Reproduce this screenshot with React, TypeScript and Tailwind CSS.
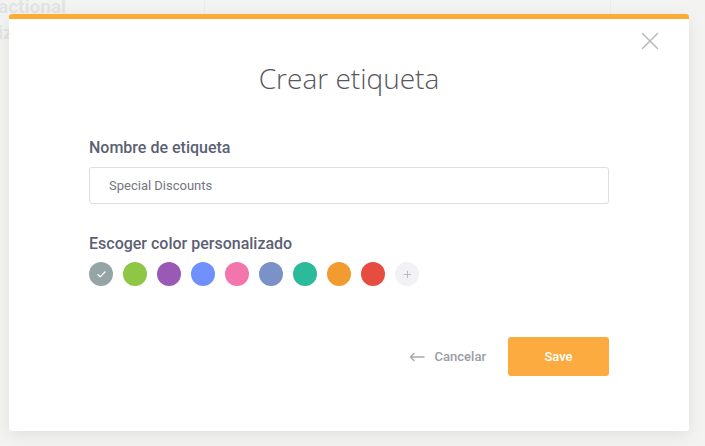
import React from 'react';
import { Check, Plus, X } from 'lucide-react';

const swatches = [
  '#95a5a6',
  '#8dc745',
  '#9b59b6',
  '#7091fd',
  '#f276ab',
  '#7a91c9',
  '#2bbb9a',
  '#f29b30',
  '#e74d3f',
];

export default function App() {
  return (
    <div className="relative h-[446px] w-[705px] overflow-hidden bg-[#f3f3f2] pl-[9px] pt-[14px] font-['Roboto',sans-serif]">
      {/* blurred page behind the modal */}
      <div className="absolute left-0 top-[-6px] text-[19px] font-bold leading-[26px] text-[#e3e3e3]">
        <div className="-ml-[2px]">actional</div>
        <div className="-ml-[2px]">iz</div>
      </div>
      <div className="absolute left-[204px] top-0 h-[14px] w-px bg-[#ececec]" />
      <div className="absolute left-[610px] top-0 h-[14px] w-px bg-[#ececec]" />

      <div className="relative h-[417px] w-[680px] rounded-[3px] border-t-[5px] border-[#fcab34] bg-white shadow-[0_4px_16px_rgba(0,0,0,0.08)]">
        <button className="absolute right-[24px] top-[7px] text-[#bababa]">
          <X className="h-[30px] w-[30px]" strokeWidth={1.2} />
        </button>

        <h1 className="pt-[40px] text-center font-['Open_Sans',sans-serif] text-[28px] font-light leading-[38px] text-[#55575e]">
          Crear etiqueta
        </h1>

        <div className="px-[80px]">
          <div className="mt-[39px] text-[16px] font-medium leading-[24px] text-[#5b6172]">
            Nombre de etiqueta
          </div>
          <div className="mt-[7px] flex h-[37px] items-center rounded-[3px] border border-[#dedede] pl-[19px] text-[13px] text-[#737780]">
            Special Discounts
          </div>

          <div className="mt-[28px] text-[16px] font-medium leading-[24px] text-[#5b6172]">
            Escoger color personalizado
          </div>
          <div className="mt-[6px] flex items-center gap-[10px]">
            {swatches.map((c, i) => (
              <div
                key={c}
                className="flex h-[24px] w-[24px] items-center justify-center rounded-full"
                style={{ backgroundColor: c }}
              >
                {i === 0 && <Check className="h-[11px] w-[11px] text-white" strokeWidth={2.5} />}
              </div>
            ))}
            <div className="flex h-[24px] w-[24px] items-center justify-center rounded-full bg-[#f1f1f6]">
              <Plus className="h-[11px] w-[11px] text-[#b5b6c0]" strokeWidth={2} />
            </div>
          </div>

          <div className="mt-[51px] flex items-center justify-end">
            <button className="mr-[22px] flex items-center gap-[10px] text-[13px] font-medium text-[#9a9ca3]">
              <svg width="16" height="10" viewBox="0 0 16 10" fill="none" stroke="#a9abb1" strokeWidth="1.6" strokeLinecap="round" strokeLinejoin="round">
                <path d="M15 5H1.5M5 1.5L1.5 5L5 8.5" />
              </svg>
              Cancelar
            </button>
            <button className="h-[39px] w-[101px] rounded-[3px] bg-[#fcab40] text-[13px] font-medium text-white">
              Save
            </button>
          </div>
        </div>
      </div>
    </div>
  );
}
